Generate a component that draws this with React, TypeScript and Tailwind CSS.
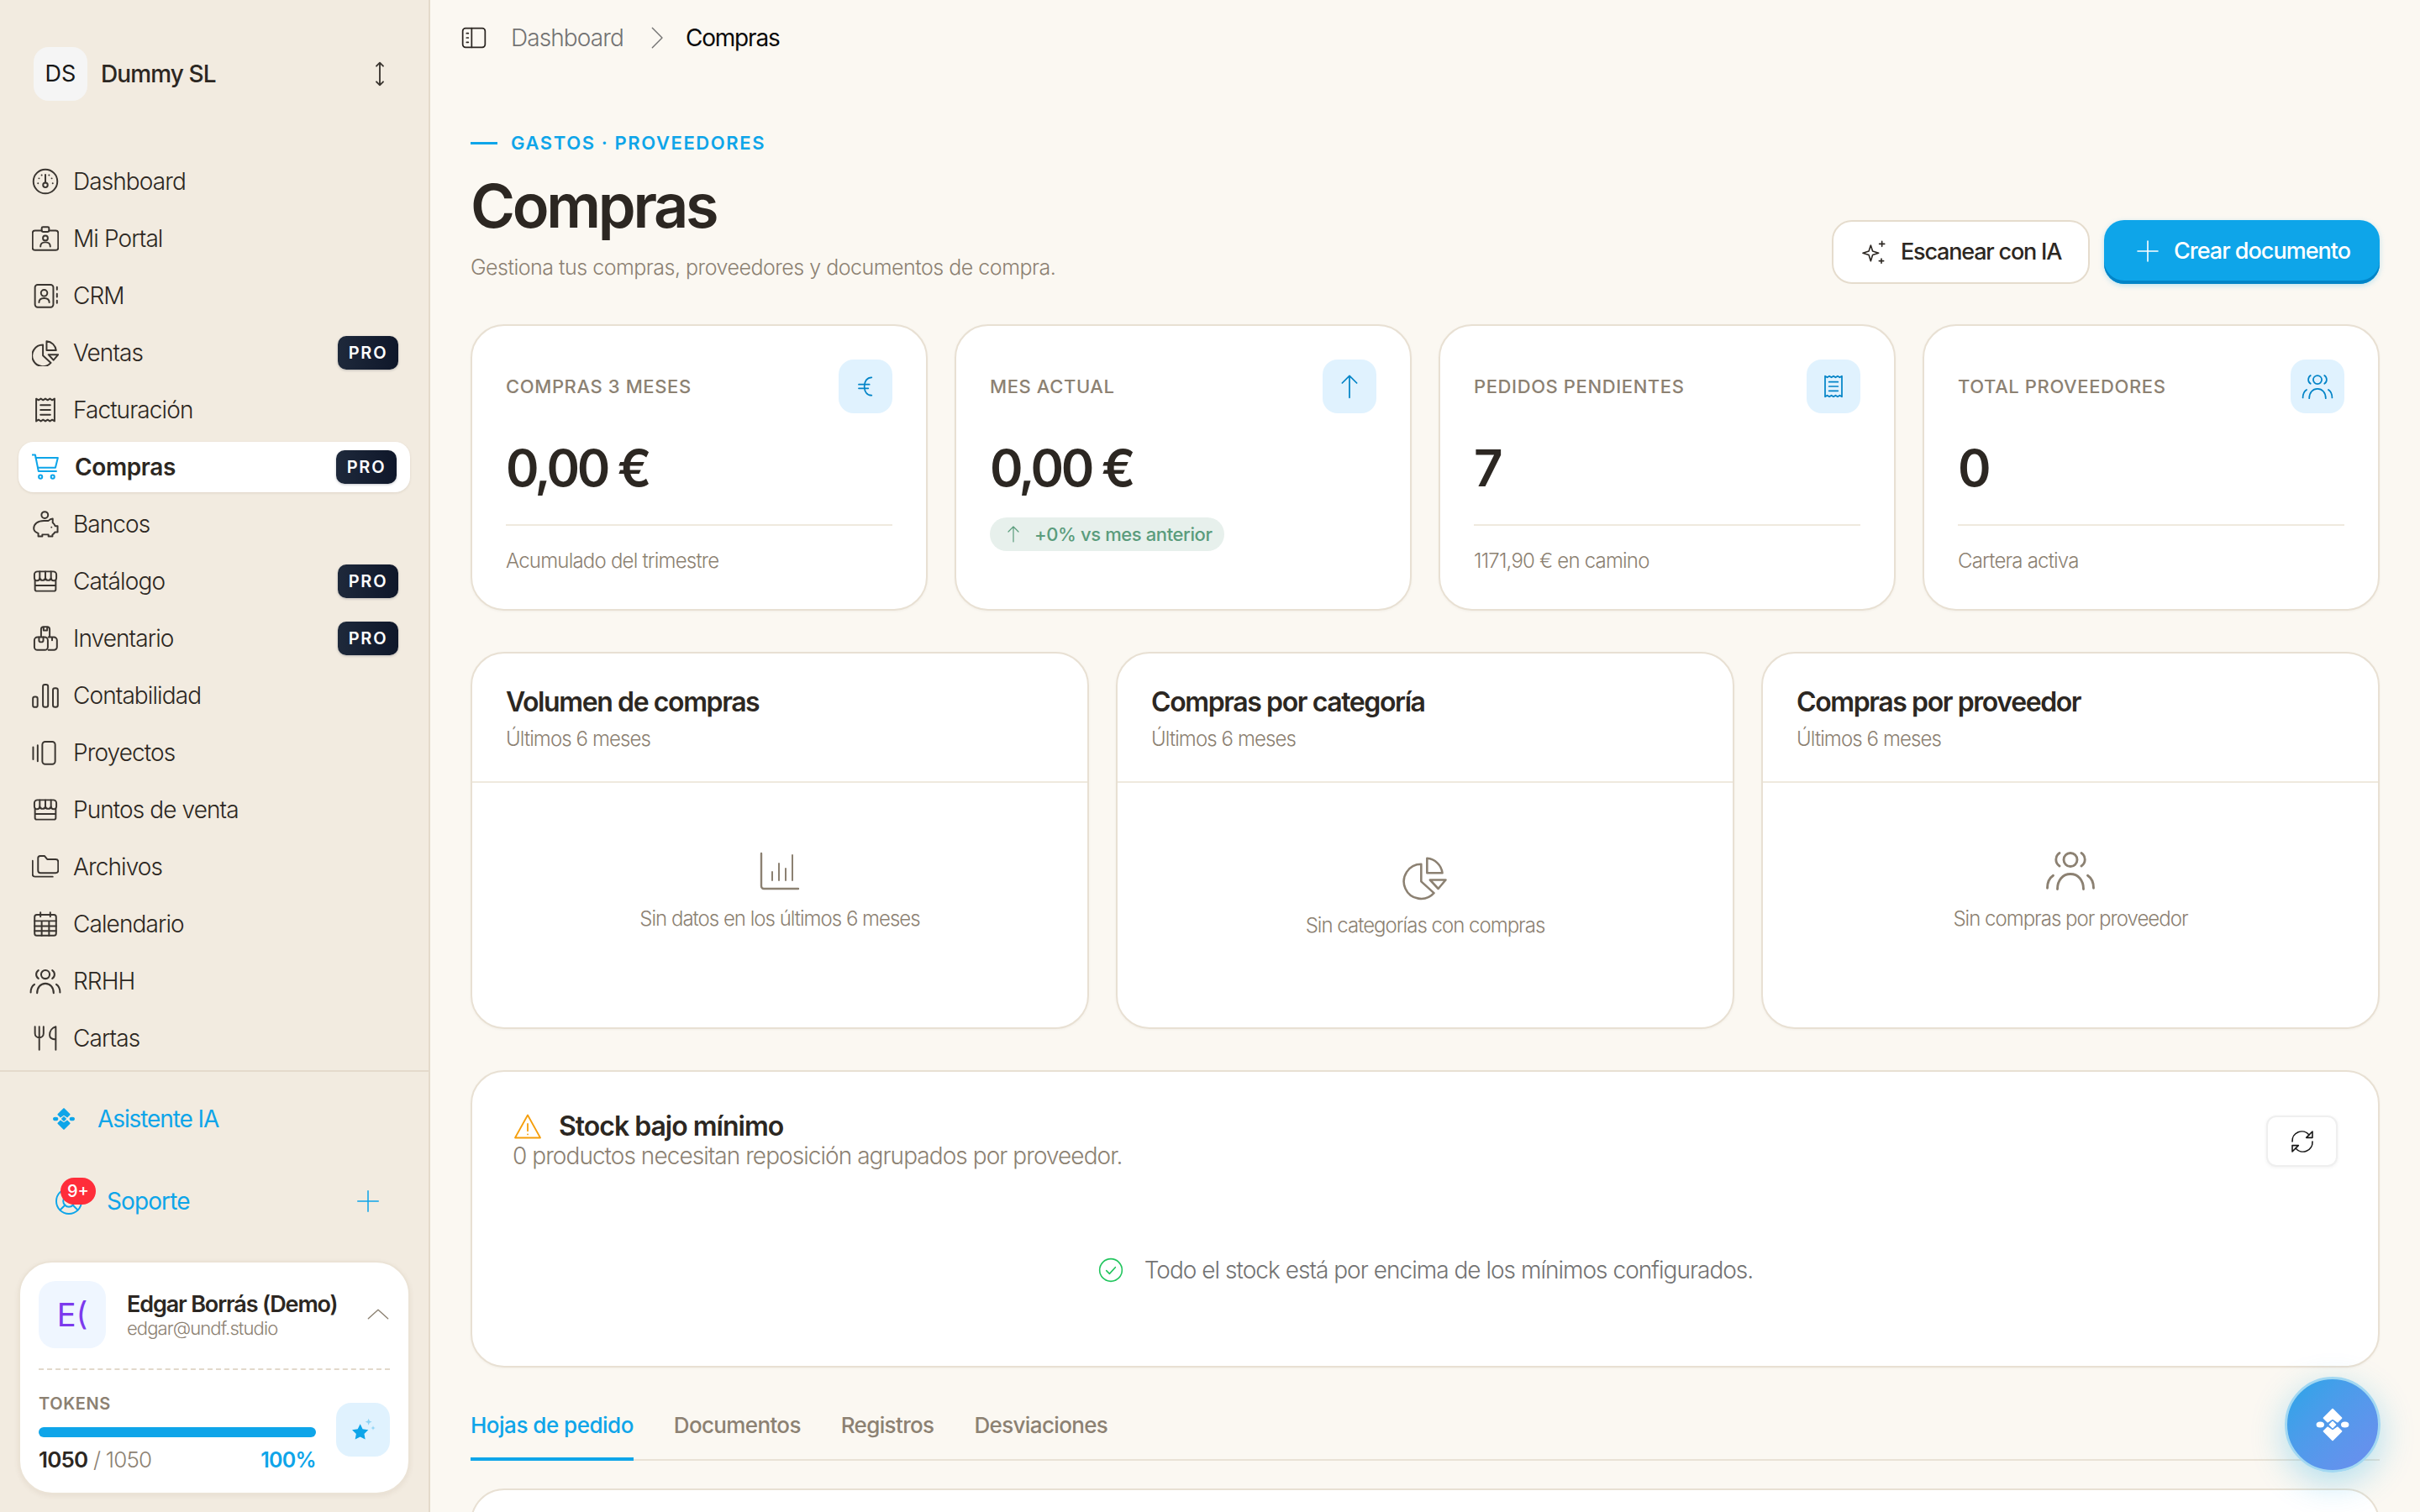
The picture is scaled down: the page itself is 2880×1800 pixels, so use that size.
import React from "react";

type IP = { className?: string; sw?: number; children?: React.ReactNode; vb?: string };
const Ic = ({ className = "w-8 h-8", sw = 1.4, children, vb = "0 0 24 24" }: IP) => (
  <svg viewBox={vb} className={`${className} shrink-0`} fill="none" stroke="currentColor" strokeWidth={sw} strokeLinecap="round" strokeLinejoin="round">
    {children}
  </svg>
);
const Nv = ({ children, sw = 1.35 }: { children: React.ReactNode; sw?: number }) => (
  <Ic vb="1 1 22 22" sw={sw}>
    {children}
  </Ic>
);

const FacturaPaths = () => (
  <>
    <path d="M4.500 2.800l1.900 1.200 1.900-1.200 1.850 1.200L12 2.800 13.850 4l1.850-1.200 1.900 1.200 1.900-1.200v18.400l-1.900-1.200-1.900 1.200-1.850-1.200L12 21.200 10.150 20l-1.850 1.200-1.900-1.200-1.900 1.200z" />
    <path d="M8 8h8M8 12h8M8 16h8" />
  </>
);

const Users = ({ className, sw = 1.3 }: { className: string; sw?: number }) => (
  <Ic className={className} sw={sw}>
    <circle cx="12" cy="7" r="3.200" />
    <path d="M5.800 21c0-4.300 2.600-7.200 6.200-7.200s6.200 2.900 6.200 7.200" />
    <path d="M6.800 3.800a3.700 3.700 0 0 0 0 6.200M17.200 3.800a3.700 3.700 0 0 1 0 6.200" />
    <path d="M1 20.500c0-2.700 1-4.800 2.800-6M23 20.500c0-2.700-1-4.800-2.800-6" />
  </Ic>
);

const PiePaths = () => (
  <>
    <path d="M10 5.500a8.800 8.800 0 1 0 6.500 14.700L10 14.300z" />
    <path d="M13 2.500a8.500 8.500 0 0 1 7.800 7.500H13z" />
    <path d="M14.500 13.500h8l-3.800 4.500z" />
  </>
);

const StorePaths = () => (
  <>
    <path d="M5.500 4h13A2.500 2.500 0 0 1 21 6.500v3a2 2 0 0 1-2.200 2 2.300 2.300 0 0 1-2.200-2 2.400 2.400 0 0 1-4.600 0 2.400 2.400 0 0 1-4.600 0 2.300 2.300 0 0 1-2.200 2A2 2 0 0 1 3 9.500v-3A2.500 2.500 0 0 1 5.500 4z" />
    <path d="M7.400 4v5.500M12 4v5.500M16.600 4v5.500" />
    <path d="M3.500 11v7.500A1.500 1.500 0 0 0 5 20h14a1.500 1.500 0 0 0 1.500-1.500V11M3.500 15.500h17" />
  </>
);

const Logo = ({ className, color }: { className: string; color: string }) => (
  <svg viewBox="0 0 24 24" className={className} fill={color} stroke={color} strokeWidth={1} strokeLinejoin="round">
    <path d="M12 1.500l6 6-2.600 2.600L12 7.800l-3.400 2.300L6 7.500z" />
    <path d="M12 22.500l-6-6 2.600-2.600 3.400 2.300 3.400-2.300 2.600 2.600z" />
    <path d="M12 10l2 2-2 2-2-2z" />
    <ellipse cx="3.600" cy="12" rx="2.200" ry="1.500" />
    <ellipse cx="20.400" cy="12" rx="2.200" ry="1.500" />
  </svg>
);

const Pro = () => (
  <span className="flex h-[40px] w-[72px] items-center justify-center rounded-[10px] bg-gradient-to-r from-[#1e293b] to-[#0f172a] text-[20px] font-semibold tracking-[1.8px] text-white shadow-[0_1px_3px_rgba(15,23,42,0.25)]">
    PRO
  </span>
);

const nav: { label: string; icon: React.ReactNode; pro?: boolean; active?: boolean }[] = [
  {
    label: "Dashboard",
    icon: (
      <Nv>
        <circle cx="12" cy="12" r="9.800" />
        <path d="M12 6.500v6.500" />
        <circle cx="12" cy="15" r="1.900" />
        <path d="M6.800 9.500h.01M17.200 9.500h.01M6 13.500h.01M18 13.500h.01M9 6.800h.01M15 6.800h.01" />
      </Nv>
    ),
  },
  {
    label: "Mi Portal",
    icon: (
      <Nv>
        <path d="M9 5.500H3.500a2 2 0 0 0-2 2V19.500a2 2 0 0 0 2 2h17a2 2 0 0 0 2-2V7.500a2 2 0 0 0-2-2H15" />
        <rect x="9" y="2.500" width="6" height="4" rx="1" />
        <circle cx="12" cy="11.600" r="2" />
        <path d="M8 18.500c0-2.400 1.800-3.500 4-3.500s4 1.100 4 3.500" />
      </Nv>
    ),
  },
  {
    label: "CRM",
    icon: (
      <Nv>
        <rect x="3.500" y="3" width="15" height="18.500" rx="2.200" />
        <circle cx="11" cy="9.800" r="2.600" />
        <path d="M6.800 17.500c0-2.500 2-3.500 4.200-3.500s4.200 1 4.200 3.500M21.500 5v2M21.500 10.500v2.500M21.500 16v2" />
      </Nv>
    ),
  },
  {
    label: "Ventas",
    pro: true,
    icon: (
      <Nv>
        <PiePaths />
      </Nv>
    ),
  },
  {
    label: "Facturación",
    icon: (
      <Nv>
        <FacturaPaths />
      </Nv>
    ),
  },
  {
    label: "Compras",
    pro: true,
    active: true,
    icon: (
      <Nv sw={1.4}>
        <path d="M1.200 2h2.500l2.700 13.500h14.500" />
        <path d="M4.200 4.500h18l-2 8H5.800" />
        <circle cx="8" cy="20" r="1.400" />
        <circle cx="18" cy="20" r="1.400" />
      </Nv>
    ),
  },
  {
    label: "Bancos",
    icon: (
      <Nv>
        <circle cx="11.500" cy="4.500" r="2.700" />
        <path d="M2.500 15.500c0-3.500 3.300-6.300 8.300-6.300h3.700c1-1 2.200-1.600 3.500-1.600v3.200c1 .8 1.600 1.700 2 2.700h2v5h-2.200c-.5.9-1.200 1.600-2 2.100V22h-3.300v-1.500H9.500V22H6.200v-2.500C4 18.800 2.500 17.500 2.500 15.500z" />
        <path d="M17 14.500h.01" />
      </Nv>
    ),
  },
  {
    label: "Catálogo",
    pro: true,
    icon: (
      <Nv>
        <StorePaths />
      </Nv>
    ),
  },
  {
    label: "Inventario",
    pro: true,
    icon: (
      <Nv>
        <path d="M8.500 10.500V4.500a2 2 0 0 1 2-2h3a2 2 0 0 1 2 2v6" />
        <path d="M10.500 2.800v2.700h3V2.800" />
        <rect x="3" y="11" width="11" height="10.500" rx="2.500" />
        <path d="M6.800 11v2.500a1.500 1.500 0 0 0 1.500 1.500h.5a1.500 1.500 0 0 0 1.500-1.500V11M14.500 11h4.500a2.500 2.500 0 0 1 2.500 2.500V19a2.500 2.500 0 0 1-2.500 2.500h-4.500M17.500 11.500v2" />
      </Nv>
    ),
  },
  {
    label: "Contabilidad",
    icon: (
      <Nv>
        <rect x="1.800" y="13" width="3.800" height="8.500" rx="1.500" />
        <rect x="10" y="3" width="4.200" height="18.500" rx="1.600" />
        <rect x="18.200" y="6" width="4" height="15.500" rx="1.600" />
      </Nv>
    ),
  },
  {
    label: "Proyectos",
    icon: (
      <Nv>
        <path d="M2 7.500v10M5.700 6v13" />
        <rect x="9.500" y="3" width="10.500" height="18.500" rx="2.400" />
      </Nv>
    ),
  },
  {
    label: "Puntos de venta",
    icon: (
      <Nv>
        <StorePaths />
      </Nv>
    ),
  },
  {
    label: "Archivos",
    icon: (
      <Nv>
        <path d="M6 4.800A1.800 1.800 0 0 1 7.800 3h3.400l2.300 2.800h7a2 2 0 0 1 2 2V15a2 2 0 0 1-2 2H8a2 2 0 0 1-2-2z" />
        <path d="M1.500 7v11a2 2 0 0 0 2 2H18" />
      </Nv>
    ),
  },
  {
    label: "Calendario",
    icon: (
      <Nv>
        <rect x="3.200" y="4.500" width="17.600" height="17" rx="1.800" />
        <path d="M8 2.500v3.500M16 2.500v3.500M3.200 9.500h17.600M3.200 13.700h17.600M3.200 17.700h17.600M9 9.500v12M15 9.500v12" />
      </Nv>
    ),
  },
  { label: "RRHH", icon: <Users className="-mx-[3px] h-[38px] w-[38px]" /> },
  {
    label: "Cartas",
    icon: (
      <Nv>
        <path d="M3.500 2.500v5.500a3.500 3.500 0 0 0 7 0V2.500M7 2.500v19M20.500 21.500v-19c-3 .7-5 3.500-5 7 0 2.500 2 3.500 5 3.500" />
      </Nv>
    ),
  },
];

const Sidebar = () => (
  <aside className="flex h-full w-[512px] shrink-0 flex-col border-r-2 border-[#e4dacb] bg-[#f2ebe0]">
    <div className="flex items-center pl-[40px] pr-[42px] pt-[56px]">
      <div className="flex h-[64px] w-[64px] items-center justify-center rounded-[18px] bg-[#f5f5f5] text-[27px] text-[#171717]">DS</div>
      <span className="ml-[16px] flex-1 text-[28px] font-medium tracking-[-0.9px] text-[#2c2722]">Dummy SL</span>
      <div className="text-[#3a3530]">
        <Ic className="h-8 w-8" sw={1.4}>
          <path d="M12 2v20M9 5l3-3 3 3M9 19l3 3 3-3" />
        </Ic>
      </div>
    </div>
    <nav className="mx-[22px] mt-[66px] flex flex-col gap-2 pb-2">
      {nav.map((n) => (
        <div
          key={n.label}
          className={`flex h-[60px] items-center pl-[16px] ${n.active ? "rounded-[18px] bg-white pr-[16px] shadow-[0_1px_3px_rgba(80,60,30,0.12)]" : "pr-[14px]"}`}
        >
          <span className={n.active ? "text-[#0ea5e9]" : "text-[#3a3530]"}>{n.icon}</span>
          <span className={`flex-1 text-[28px] ${n.active ? "ml-[19px] font-semibold tracking-[-0.4px] text-[#2c2722]" : "ml-[17px] font-light tracking-[-0.9px] text-[#2c2722]"}`}>
            {n.label}
          </span>
          {n.pro && <Pro />}
        </div>
      ))}
    </nav>
    <div className="flex-1 border-t-2 border-[#e4dacb] px-[22px] pt-[26px]">
      <div className="flex h-[60px] items-center pl-[40px] text-[#0ea5e9]">
        <Logo className="h-[28px] w-[28px]" color="#0ea5e9" />
        <span className="ml-[26px] text-[28px] tracking-[-1.1px]">Asistente IA</span>
      </div>
      <div className="relative mt-[38px] flex h-[60px] items-center pl-[42px] pr-[36px] text-[#0ea5e9]">
        <Ic className="h-9 w-9" sw={1.3}>
          <circle cx="12" cy="12" r="10" />
          <circle cx="12" cy="12" r="4.500" />
          <path d="M5 19l4-4M19 19l-4-4" />
        </Ic>
        <span className="absolute left-[50px] top-[2px] flex h-[32px] w-[42px] items-center justify-center rounded-full bg-[#ff2d3a] text-[20px] font-medium text-white">9+</span>
        <span className="ml-[27px] flex-1 text-[28px] tracking-[-0.9px]">Soporte</span>
        <Ic className="h-7 w-7" sw={1.3}>
          <path d="M12 1.500v21M1.500 12h21" />
        </Ic>
      </div>
      <div className="mt-[41px] h-[278px] rounded-[40px] border-2 border-[#ebe3d6] bg-white px-[22px] pt-[22px] shadow-[0_2px_6px_rgba(80,60,30,0.07)]">
        <div className="flex items-center">
          <div className="flex h-[80px] w-[80px] shrink-0 items-center justify-center rounded-[20px] bg-[#eff6ff] text-[38px] text-[#7c3aed]">E(</div>
          <div className="ml-[25px] flex-1">
            <div className="text-[27px] font-semibold leading-[32px] tracking-[-1.15px] text-[#2c2722]">Edgar Borrás (Demo)</div>
            <div className="text-[22px] font-light leading-[24px] tracking-[-0.9px] text-[#8c8172]">edgar@undf.studio</div>
          </div>
          <Ic className="-mt-[2px] h-7 w-7 text-[#8c8172]" sw={1.2}>
            <path d="M2 17l10-9 10 9" />
          </Ic>
        </div>
        <div className="mt-[24px] border-t-2 border-dashed border-[#e2d9cb]" />
        <div className="mt-[26px] flex">
          <div className="w-[330px]">
            <div className="text-[20px] font-semibold leading-[28px] tracking-[0.6px] text-[#8c8172]">TOKENS</div>
            <div className="mt-[14px] h-[12px] rounded-full bg-[#0ea5e9]" />
            <div className="mt-[11px] flex items-center justify-between text-[26px] leading-[32px]">
              <span className="font-light tracking-[-0.8px] text-[#8c8172]">
                <span className="font-semibold text-[#2c2722]">1050</span> / 1050
              </span>
              <span className="text-[25px] font-semibold tracking-[-0.7px] text-[#0ea5e9]">100%</span>
            </div>
          </div>
          <div className="ml-[24px] mt-[13px] flex h-[64px] w-[64px] items-center justify-center rounded-[18px] bg-[#e0f2fe]">
            <svg viewBox="0 0 24 24" className="h-8 w-8">
              <path fill="#0ea5e9" d="M9.500 7l2.200 4.500 5 .7-3.600 3.500.9 5-4.500-2.400L5 20.700l.9-5-3.600-3.500 5-.7z" />
              <path fill="#8dd3f5" d="M17 2l.8 2.200L20 5l-2.200.8L17 8l-.8-2.200L14 5l2.200-.8zM21 8.500l.5 1.500 1.500.5-1.500.5-.5 1.500-.5-1.500-1.500-.5 1.500-.5z" />
            </svg>
          </div>
        </div>
      </div>
    </div>
  </aside>
);

const Stat = ({ label, value, sub, icon, pill }: { label: string; value: string; sub?: string; icon: React.ReactNode; pill?: string }) => (
  <div className="h-[341px] rounded-[40px] border-2 border-[#e8e0d3] bg-white p-[40px] shadow-[0_1px_3px_rgba(80,60,30,0.05)]">
    <div className="flex h-[64px] items-center justify-between">
      <span className="text-[22px] font-medium tracking-[0.6px] text-[#8c8172]">{label}</span>
      <div className="flex h-[64px] w-[64px] items-center justify-center rounded-[18px] bg-[#e0f2fe] text-[#0284c7]">{icon}</div>
    </div>
    <div className="mt-[29px] text-[60px] font-semibold leading-[72px] tracking-[-3.4px] text-[#2c2722]">{value}</div>
    {pill ? (
      <div className="mt-[23px] flex h-[40px] w-[279px] items-center rounded-full bg-[#e7f0ec] pl-[16px] text-[#5a9c7c]">
        <Ic className="h-[24px] w-[24px]" sw={1.2}>
          <path d="M12 21V3M6 9l6-6 6 6" />
        </Ic>
        <span className="ml-[13px] text-[22px] font-medium tracking-[-0.4px]">{pill}</span>
      </div>
    ) : (
      <>
        <div className="mt-[31px] h-[2px] bg-[#efe9de]" />
        <div className="mt-[26px] text-[24px] font-light leading-[32px] tracking-[-0.8px] text-[#8c8172]">{sub}</div>
      </>
    )}
  </div>
);

const ChartCard = ({ title, empty, icon, pt }: { title: string; empty: string; icon: React.ReactNode; pt: string }) => (
  <div className="flex h-[449px] flex-col overflow-hidden rounded-[40px] border-2 border-[#e8e0d3] bg-white shadow-[0_1px_3px_rgba(80,60,30,0.05)]">
    <div className="h-[154px] border-b-2 border-[#efe9de] px-[40px] pt-[36px]">
      <div className="text-[32px] font-semibold leading-[44px] tracking-[-1.4px] text-[#2c2722]">{title}</div>
      <div className="mt-[6px] text-[24px] font-light leading-[32px] tracking-[-0.9px] text-[#8c8172]">Últimos 6 meses</div>
    </div>
    <div className={`flex flex-col items-center ${pt}`}>
      <div className="text-[#8c8172]">{icon}</div>
      <div className="mt-[18px] text-[24px] font-light leading-[32px] tracking-[-1px] text-[#8c8172]">{empty}</div>
    </div>
  </div>
);

const App = () => (
  <div className="relative flex h-screen w-full overflow-hidden bg-[#fbf8f2] font-[Inter,sans-serif]">
    <Sidebar />
    <main className="min-w-0 flex-1 overflow-hidden">
      <header className="flex h-[90px] items-center pl-[36px]">
        <Ic className="h-8 w-8 text-[#2c2722]" sw={1.3}>
          <rect x="2" y="3.500" width="20" height="17" rx="2.500" />
          <path d="M10 3.500v17M5.500 8h1.500M5.500 12h1.500M5.500 16h1.500" />
        </Ic>
        <span className="ml-[28px] text-[28px] font-light tracking-[-0.9px] text-[#737373]">Dashboard</span>
        <Ic className="ml-[25px] h-7 w-7 text-[#737373]" sw={1.2}>
          <path d="M8 2l10 10-10 10" />
        </Ic>
        <span className="ml-[21px] text-[28px] tracking-[-1.2px] text-[#0a0a0a]">Compras</span>
      </header>
      <div className="px-[48px] pt-[66px]">
        <div className="flex items-end justify-between">
          <div>
            <div className="flex h-[28px] items-center text-[#0ea5e9]">
              <span className="h-[3px] w-[32px] bg-[#0ea5e9]" />
              <span className="ml-[16px] text-[22px] font-semibold tracking-[1.6px]">GASTOS · PROVEEDORES</span>
            </div>
            <h1 className="mt-[21px] text-[72px] font-semibold leading-[80px] tracking-[-3.3px] text-[#2c2722]">Compras</h1>
            <p className="mt-[13px] text-[25px] font-light leading-[40px] tracking-[-0.5px] text-[#8c8172]">Gestiona tus compras, proveedores y documentos de compra.</p>
          </div>
          <div className="flex gap-[17px]">
            <button className="flex h-[76px] w-[307px] items-center rounded-[24px] border-2 border-[#e5dccd] bg-white pl-[31px] text-[#2c2722]">
              <Ic className="h-8 w-8" sw={1.2}>
                <path d="M10 6l1.700 5.300L17 13l-5.300 1.700L10 20l-1.700-5.300L3 13l5.300-1.700zM20 2.500v4.500M17.700 4.800h4.600M19.500 18v4M17.500 20h4" />
              </Ic>
              <span className="ml-[17px] text-[27px] font-medium tracking-[-1.2px]">Escanear con IA</span>
            </button>
            <button className="flex h-[76px] w-[328px] items-center rounded-[24px] bg-[#0ea5e9] pb-[2px] pl-[36px] text-white shadow-[inset_0_-4px_0_#0284c7,0_2px_6px_rgba(14,165,233,0.25)]">
              <Ic className="h-8 w-8" sw={1.2}>
                <path d="M12 3v18M3 12h18" />
              </Ic>
              <span className="ml-[15px] text-[27px] font-medium tracking-[-1px]">Crear documento</span>
            </button>
          </div>
        </div>

        <section className="mt-[48px] grid grid-cols-4 gap-[32px]">
          <Stat
            label="COMPRAS 3 MESES"
            value="0,00 €"
            sub="Acumulado del trimestre"
            icon={
              <Ic className="h-8 w-8" sw={1.3}>
                <path d="M17.500 4c-4.200 0-6.500 3.400-6.500 8s2.300 8 6.500 8M6 10.300h9.500M6 13.700h8.500" />
              </Ic>
            }
          />
          <Stat
            label="MES ACTUAL"
            value="0,00 €"
            pill="+0% vs mes anterior"
            icon={
              <Ic className="h-8 w-8" sw={1.3}>
                <path d="M12 22V2.500M5.500 9L12 2.500 18.500 9" />
              </Ic>
            }
          />
          <Stat
            label="PEDIDOS PENDIENTES"
            value="7"
            sub="1171,90 € en camino"
            icon={
              <Ic className="h-8 w-8" sw={1.3}>
                <FacturaPaths />
              </Ic>
            }
          />
          <Stat label="TOTAL PROVEEDORES" value="0" sub="Cartera activa" icon={<Users className="h-[38px] w-[38px]" sw={1.1} />} />
        </section>

        <section className="mt-[49px] grid grid-cols-3 gap-[32px]">
          <ChartCard
            title="Volumen de compras"
            empty="Sin datos en los últimos 6 meses"
            pt="pt-[80px]"
            icon={
              <Ic className="h-12 w-12" sw={1}>
                <path d="M1 2v19.500A1.500 1.500 0 0 0 2.500 23H23" strokeWidth={1.2} />
                <path d="M7.500 18v-5M11.500 18V8M15.500 18v-7M19.500 18V3" />
              </Ic>
            }
          />
          <ChartCard
            title="Compras por categoría"
            empty="Sin categorías con compras"
            pt="pt-[88px]"
            icon={
              <Ic className="-my-[4px] h-[56px] w-[56px]" sw={1.1}>
                <PiePaths />
              </Ic>
            }
          />
          <ChartCard title="Compras por proveedor" empty="Sin compras por proveedor" pt="pt-[80px]" icon={<Users className="-my-[6px] h-[60px] w-[60px]" sw={1.15} />} />
        </section>

        <section className="mt-[49px] flex h-[354px] flex-col rounded-[40px] border-2 border-[#e8e0d3] bg-white pl-[48px] pr-[48px] pt-[43px] shadow-[0_1px_3px_rgba(80,60,30,0.05)]">
          <div className="flex items-start justify-between">
            <div>
              <div className="flex h-[44px] items-center">
                <Ic className="h-9 w-9 text-[#f59e0b]" sw={1.2}>
                  <path d="M12 3L2 21h20zM12 10v5.500M12 18.300h.01" />
                </Ic>
                <span className="ml-[19px] text-[32px] font-semibold tracking-[-1px] text-[#2c2722]">Stock bajo mínimo</span>
              </div>
              <p className="-mt-[2px] text-[28px] font-light leading-[30px] tracking-[-0.95px] text-[#8c8172]">0 productos necesitan reposición agrupados por proveedor.</p>
            </div>
            <button className="mt-[9px] flex h-[61px] w-[85px] items-center justify-center rounded-[12px] border-2 border-[#efefef] bg-white text-[#171717] shadow-[0_1px_4px_rgba(0,0,0,0.06)]">
              <Ic className="h-8 w-8" sw={1.2}>
                <path d="M3 12a8.500 8.500 0 0 1 15-6M21 12a8.500 8.500 0 0 1-15 6" />
                <path d="M21 3v5.500h-5.500zM3 21v-5.500h5.500z" />
              </Ic>
            </button>
          </div>
          <div className="flex flex-1 items-center justify-center pt-[6px]">
            <Ic className="h-8 w-8 text-[#22c55e]" sw={1.2}>
              <circle cx="12" cy="12" r="10" />
              <path d="M8 12.500l2.800 2.800L16 9.500" />
            </Ic>
            <span className="ml-[24px] text-[28px] font-light tracking-[-0.98px] text-[#737373]">Todo el stock está por encima de los mínimos configurados.</span>
          </div>
        </section>

        <nav className="mt-[29px] flex gap-[48px] border-b-2 border-[#e9e2d6]">
          <div className="-mb-[2px] h-[82px] border-b-4 border-[#0ea5e9] pt-[22px] text-[26px] font-medium leading-[36px] tracking-[-0.5px] text-[#0ea5e9]">Hojas de pedido</div>
          {["Documentos", "Registros", "Desviaciones"].map((t) => (
            <div key={t} className="h-[80px] pt-[22px] text-[26px] font-medium leading-[36px] tracking-[-0.65px] text-[#8c8172]">
              {t}
            </div>
          ))}
        </nav>

        <div className="mt-[33px] h-[200px] rounded-[40px] border-2 border-[#e8e0d3] bg-white" />
      </div>
    </main>
    <button className="absolute bottom-[47px] right-[47px] flex h-[114px] w-[114px] items-center justify-center rounded-full border-[3px] border-[#a2d8f2] bg-gradient-to-br from-[#25a5e8] to-[#6c8dee] shadow-[0_12px_40px_rgba(14,165,233,0.3)]">
      <Logo className="h-[42px] w-[42px]" color="#ffffff" />
    </button>
  </div>
);

export default App;
